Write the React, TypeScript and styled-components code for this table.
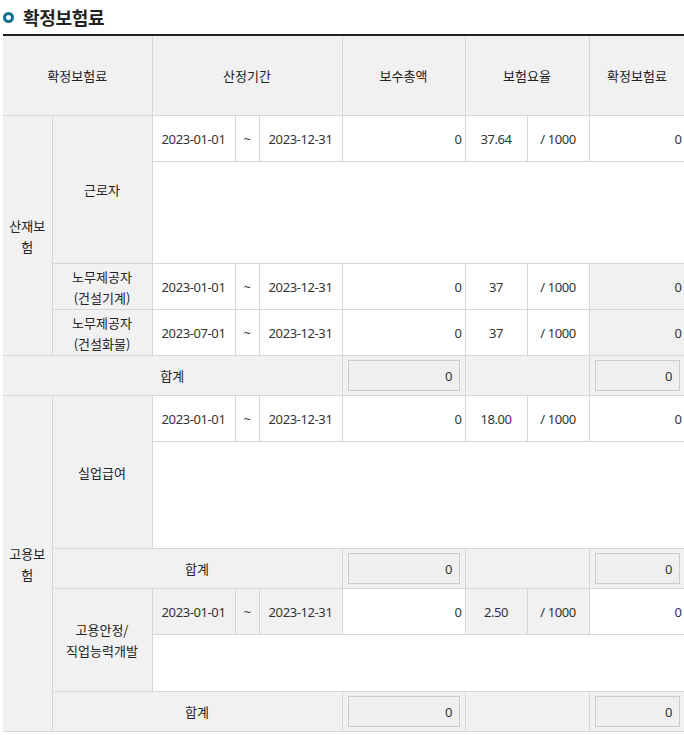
import React from "react";
import styled, { createGlobalStyle } from "styled-components";

const Global = createGlobalStyle`
  html, body { margin: 0; padding: 0; background: #fff; }
  body { font-family: "Noto Sans", "Noto Sans CJK KR", sans-serif; color: #333; }
`;

const Page = styled.div`
  padding: 0 0 0 3px;
  width: 682px;
`;

const Title = styled.h2`
  display: flex;
  align-items: center;
  gap: 9px;
  margin: 0;
  height: 34px;
  font-family: "Noto Sans CJK KR", sans-serif;
  font-size: 18px;
  font-weight: 700;
  color: #222;
  letter-spacing: -0.3px;
`;

const Bullet = styled.span`
  width: 5px;
  height: 5px;
  border: 3px solid #0f6e8c;
  border-radius: 50%;
  margin-top: 1px;
`;

const Table = styled.table`
  width: 682px;
  table-layout: fixed;
  border-collapse: collapse;
  border-top: 2px solid #222;
  font-size: 13px;
`;

const Th = styled.th`
  height: 79px;
  padding: 0;
  background: #f1f1f1;
  border: 1px solid #d6d6d6;
  border-top: none;
  font-family: "Noto Sans CJK KR", sans-serif;
  font-weight: 400;
  color: #222;
  &:first-child { border-left: none; }
`;

const Label = styled.td<{ $first?: boolean }>`
  padding: 0 4px;
  background: #f1f1f1;
  border: 1px solid #d6d6d6;
  text-align: center;
  font-family: "Noto Sans CJK KR", sans-serif;
  line-height: 21px;
  color: #222;
  ${(p) => (p.$first ? "border-left: none;" : "")}
`;

const Cell = styled.td<{ $align?: "left" | "center" | "right"; $gray?: boolean; $h?: number }>`
  height: ${(p) => (p.$h ? p.$h - 1 : 45)}px;
  padding: 0 ${(p) => (p.$align === "right" ? "3px" : "0")};
  border: 1px solid #d6d6d6;
  background: ${(p) => (p.$gray ? "#f1f1f1" : "#fff")};
  text-align: ${(p) => p.$align || "center"};
  color: #333;
  letter-spacing: -0.4px;
`;

const Blank = styled.td<{ $h: number }>`
  height: ${(p) => p.$h - 1}px;
  padding: 0;
  border: 1px solid #d6d6d6;
  border-right: none;
  background: #fff;
`;

const SumCell = styled.td`
  height: 39px;
  padding: 0 5px;
  border: 1px solid #d6d6d6;
  background: #f1f1f1;
`;

const ReadInput = styled.input`
  display: block;
  box-sizing: border-box;
  width: 100%;
  height: 31px;
  margin: 0;
  padding: 0 6px;
  border: 1px solid #cccccc;
  background: #efefef;
  text-align: right;
  font-family: "Noto Sans", sans-serif;
  font-size: 13px;
  color: #333;
`;

type DateRowProps = {
  from: string;
  rate: string;
  grayDates?: boolean;
  grayRate?: boolean;
  grayFee?: boolean;
};

const DateCells = ({ from, rate, grayDates, grayRate, grayFee }: DateRowProps) => (
  <>
    <Cell $gray={grayDates}>{from}</Cell>
    <Cell $gray={grayDates}>~</Cell>
    <Cell $gray={grayDates}>2023-12-31</Cell>
    <Cell $align="right">0</Cell>
    <Cell $gray={grayRate}>{rate}</Cell>
    <Cell $gray={grayRate}>/ 1000</Cell>
    <Cell $align="right" $gray={grayFee}>0</Cell>
  </>
);

const SumCells = () => (
  <>
    <SumCell>
      <ReadInput readOnly value="0" />
    </SumCell>
    <SumCell colSpan={2} />
    <SumCell>
      <ReadInput readOnly value="0" />
    </SumCell>
  </>
);

export default function App() {
  return (
    <Page>
      <Global />
      <Title>
        <Bullet />
        확정보험료
      </Title>
      <Table>
        <colgroup>
          <col style={{ width: 49 }} />
          <col style={{ width: 100 }} />
          <col style={{ width: 83 }} />
          <col style={{ width: 24 }} />
          <col style={{ width: 83 }} />
          <col style={{ width: 123 }} />
          <col style={{ width: 62 }} />
          <col style={{ width: 62 }} />
          <col style={{ width: 96 }} />
        </colgroup>
        <thead>
          <tr>
            <Th colSpan={2}>확정보험료</Th>
            <Th colSpan={3}>산정기간</Th>
            <Th>보수총액</Th>
            <Th colSpan={2}>보험요율</Th>
            <Th>확정보험료</Th>
          </tr>
        </thead>
        <tbody>
          <tr>
            <Label $first rowSpan={4}>산재보험</Label>
            <Label rowSpan={2}>근로자</Label>
            <DateCells from="2023-01-01" rate="37.64" />
          </tr>
          <tr>
            <Blank colSpan={7} $h={102} />
          </tr>
          <tr>
            <Label>노무제공자<br />(건설기계)</Label>
            <DateCells from="2023-01-01" rate="37" grayFee />
          </tr>
          <tr>
            <Label>노무제공자<br />(건설화물)</Label>
            <DateCells from="2023-07-01" rate="37" grayFee />
          </tr>
          <tr>
            <Label $first colSpan={5}>합계</Label>
            <SumCells />
          </tr>
          <tr>
            <Label $first rowSpan={6}>고용보험</Label>
            <Label rowSpan={2}>실업급여</Label>
            <DateCells from="2023-01-01" rate="18.00" />
          </tr>
          <tr>
            <Blank colSpan={7} $h={107} />
          </tr>
          <tr>
            <Label colSpan={4}>합계</Label>
            <SumCells />
          </tr>
          <tr>
            <Label rowSpan={2}>고용안정/<br />직업능력개발</Label>
            <DateCells from="2023-01-01" rate="2.50" grayDates grayRate />
          </tr>
          <tr>
            <Blank colSpan={7} $h={57} />
          </tr>
          <tr>
            <Label colSpan={4}>합계</Label>
            <SumCells />
          </tr>
        </tbody>
      </Table>
    </Page>
  );
}
